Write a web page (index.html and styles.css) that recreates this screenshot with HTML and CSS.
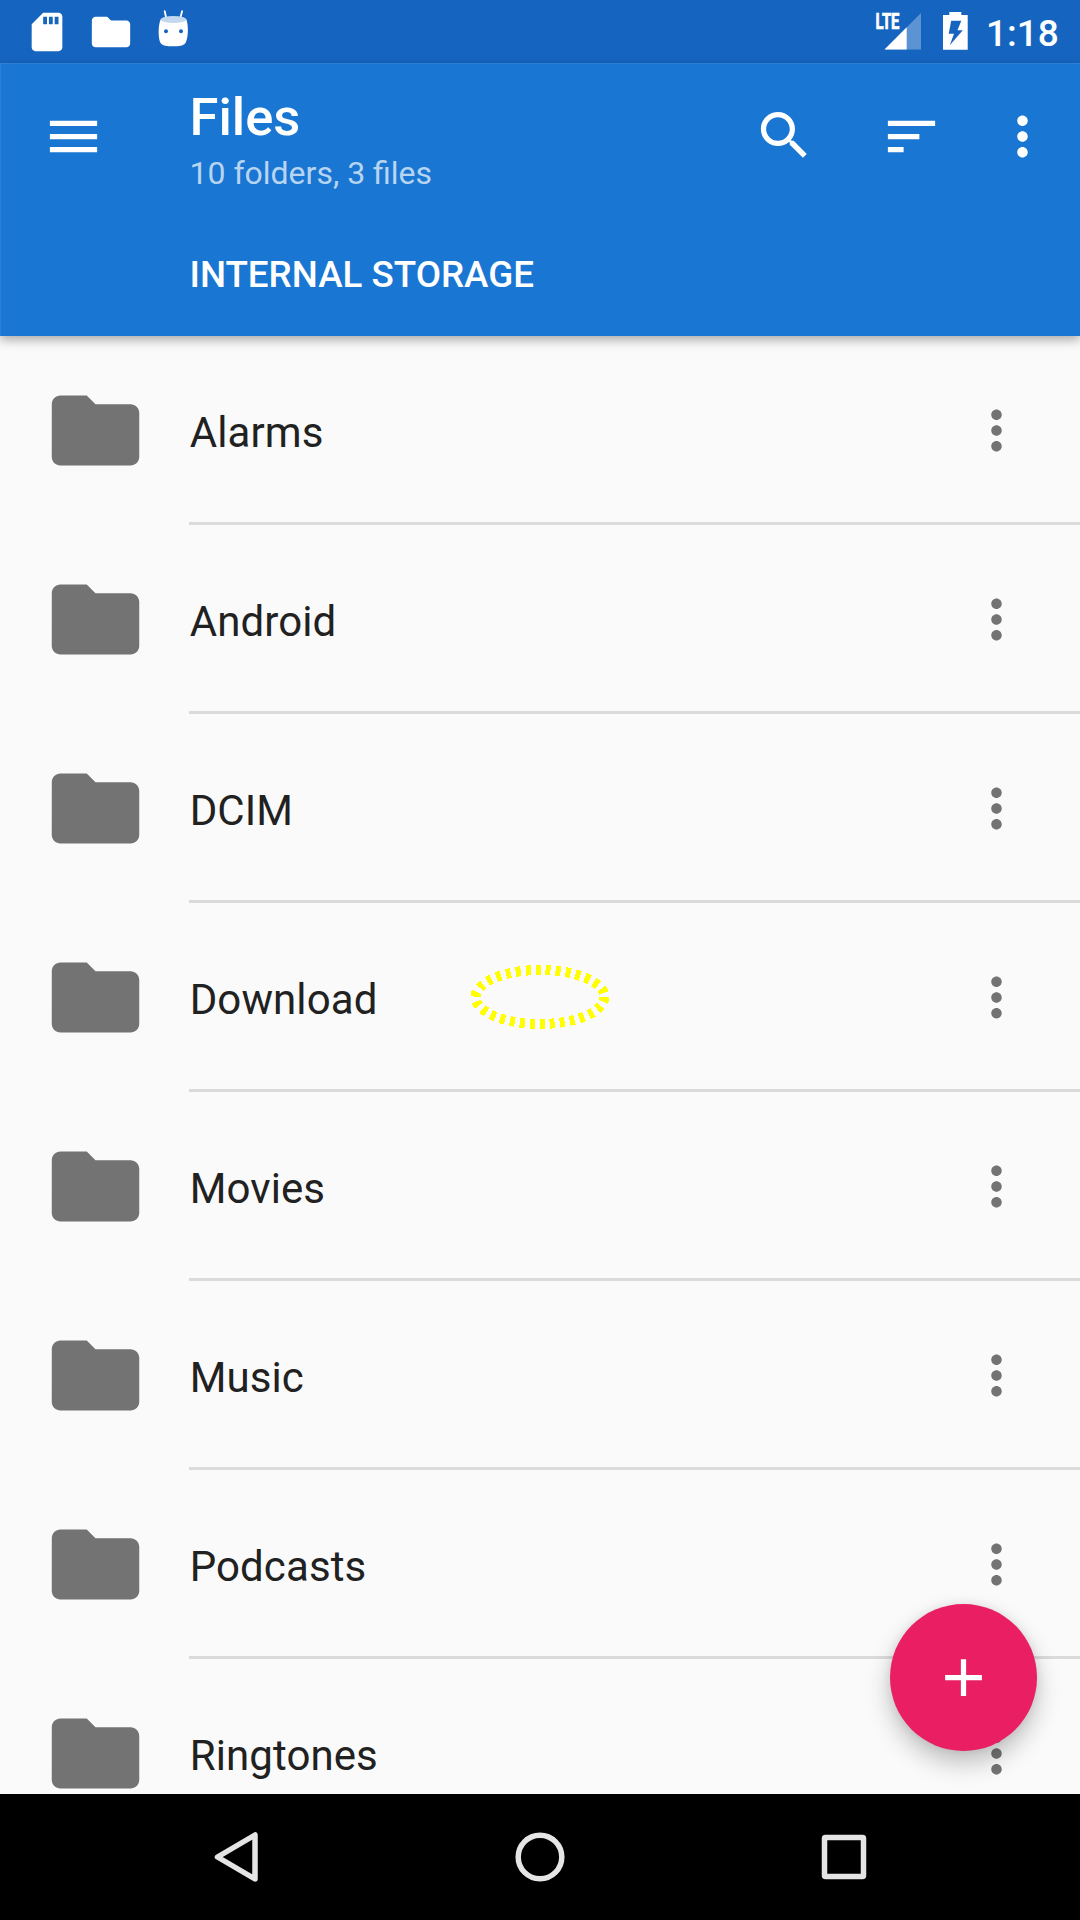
FILE: index.html
```html
<!DOCTYPE html>
<html lang="en">
<head>
<meta charset="utf-8">
<title>Files</title>
<link rel="stylesheet" href="styles.css">
</head>
<body>
<svg class="defs" width="0" height="0" aria-hidden="true">
  <symbol id="folder" viewBox="0 0 24 24"><path d="M10 4H4c-1.1 0-1.99.9-1.99 2L2 18c0 1.1.9 2 2 2h16c1.1 0 2-.9 2-2V8c0-1.1-.9-2-2-2h-8l-2-2z"/></symbol>
  <symbol id="more" viewBox="0 0 24 24"><path d="M12 8c1.1 0 2-.9 2-2s-.9-2-2-2-2 .9-2 2 .9 2 2 2zm0 2c-1.1 0-2 .9-2 2s.9 2 2 2 2-.9 2-2-.9-2-2-2zm0 6c-1.1 0-2 .9-2 2s.9 2 2 2 2-.9 2-2-.9-2-2-2z"/></symbol>
</svg>
<div class="screen">
  <header class="status">
    <div class="notifications">
      <svg class="note" viewBox="0 0 24 24"><path d="M18 2h-8L4.02 8 4 20c0 1.1.9 2 2 2h12c1.1 0 2-.9 2-2V4c0-1.1-.9-2-2-2zm-6 6h-2V4h2v4zm3 0h-2V4h2v4zm3 0h-2V4h2v4z"/></svg>
      <svg class="note"><use href="#folder"/></svg>
      <svg class="droid" viewBox="0 0 32 38">
        <path d="M6.700 1.200 8.200 8M24.100 1.200 22.300 8" fill="none" stroke="#fff" stroke-width="1.800" stroke-linecap="round"/>
        <path d="M2.800 9C0 15 .2 27 2 32q.8 2.600 4 3.400 9 1.800 18 0 3.200-.8 4-3.400C30.300 27 30.700 15 28.200 9q-12.700 6-25.400 0z"/>
        <ellipse cx="15.500" cy="9.500" rx="12.700" ry="3.500" fill="#c3d7ef"/>
        <circle cx="8" cy="21.300" r="2" fill="#1565c0"/><circle cx="23" cy="21.300" r="2" fill="#1565c0"/>
      </svg>
    </div>
    <svg class="signal" viewBox="0 0 48 40">
      <path d="M46 1v36.500H9.500z" opacity=".3"/>
      <path d="M31.700 15.300v22.200H9.500z"/>
      <text class="lte" x=".5" y="17" textLength="24" lengthAdjust="spacingAndGlyphs">LTE</text>
    </svg>
    <svg class="battery" viewBox="0 0 25 38"><path fill-rule="evenodd" d="M6.300 0h12v3H24.700v34.700H0V3h6.300zM8.200 8.800 5.700 21.700H11L6.800 33.200 19.800 18.300H14.500L18.300 8.800z"/></svg>
    <span class="clock">1:18</span>
  </header>
  <section class="appbar">
    <div class="toolbar">
      <svg class="icon" viewBox="0 0 24 24"><path d="M3 18h18v-2H3v2zm0-5h18v-2H3v2zm0-7v2h18V6H3z"/></svg>
      <div class="titles">
        <h1 class="title">Files</h1>
        <p class="subtitle">10 folders, 3 files</p>
      </div>
      <svg class="icon search" viewBox="0 0 24 24"><path d="M15.500 14h-.79l-.28-.27C15.410 12.590 16 11.110 16 9.500 16 5.910 13.090 3 9.500 3S3 5.910 3 9.500 5.910 16 9.500 16c1.610 0 3.090-.59 4.230-1.570l.27.28v.79l5 4.990L20.490 19l-4.990-5zm-6 0C7.010 14 5 11.990 5 9.500S7.010 5 9.500 5 14 7.010 14 9.500 11.990 14 9.500 14z"/></svg>
      <svg class="icon sort" viewBox="0 0 24 24"><path d="M3 18h6v-2H3v2zM3 6v2h18V6H3zm0 7h12v-2H3v2z"/></svg>
      <svg class="icon overflow"><use href="#more"/></svg>
    </div>
    <div class="path">INTERNAL STORAGE</div>
  </section>
  <main class="list">
    <div class="row"><svg class="folder"><use href="#folder"/></svg><div class="cell"><span class="name">Alarms</span><svg class="more"><use href="#more"/></svg></div></div>
    <div class="row"><svg class="folder"><use href="#folder"/></svg><div class="cell"><span class="name">Android</span><svg class="more"><use href="#more"/></svg></div></div>
    <div class="row"><svg class="folder"><use href="#folder"/></svg><div class="cell"><span class="name">DCIM</span><svg class="more"><use href="#more"/></svg></div></div>
    <div class="row"><svg class="folder"><use href="#folder"/></svg><div class="cell"><span class="name">Download</span><svg class="more"><use href="#more"/></svg></div></div>
    <div class="row"><svg class="folder"><use href="#folder"/></svg><div class="cell"><span class="name">Movies</span><svg class="more"><use href="#more"/></svg></div></div>
    <div class="row"><svg class="folder"><use href="#folder"/></svg><div class="cell"><span class="name">Music</span><svg class="more"><use href="#more"/></svg></div></div>
    <div class="row"><svg class="folder"><use href="#folder"/></svg><div class="cell"><span class="name">Podcasts</span><svg class="more"><use href="#more"/></svg></div></div>
    <div class="row"><svg class="folder"><use href="#folder"/></svg><div class="cell"><span class="name">Ringtones</span><svg class="more"><use href="#more"/></svg></div></div>
    <svg class="marker" viewBox="0 0 140 66"><ellipse cx="70" cy="33" rx="64.500" ry="27"/></svg>
    <div class="fab"><svg class="icon" viewBox="0 0 24 24"><path d="M19 13h-6v6h-2v-6H5v-2h6V5h2v6h6v2z"/></svg></div>
  </main>
  <nav class="navbar">
    <svg class="key" viewBox="0 0 60 60"><path d="M49 8v44L11.500 30z"/></svg>
    <svg class="key" viewBox="0 0 60 60"><circle cx="30" cy="30" r="21.800"/></svg>
    <svg class="key" viewBox="0 0 60 60"><rect x="10.500" y="10.500" width="39" height="39" rx="1"/></svg>
  </nav>
</div>
</body>
</html>
```
FILE: styles.css
```css
* { box-sizing: border-box; margin: 0; padding: 0; }

body { font-family: Roboto, sans-serif; background: #fafafa; }

svg { display: block; flex: none; fill: currentColor; }

.defs { position: absolute; }

.screen {
  display: flex;
  flex-direction: column;
  width: 1080px;
  height: 1920px;
  overflow: hidden;
}

/* Status bar */
.status {
  display: flex;
  height: 63px;
  padding-left: 24px;
  background: #1565c0;
  color: #fff;
}
.notifications { display: flex; gap: 17.5px; flex: 1; padding-top: 8.5px; }
.note { width: 46px; height: 46px; }
.droid { width: 32px; height: 38px; margin: 1.5px 0 0 7px; }
.signal { width: 48px; height: 40px; margin: 12px 20px 0 0; overflow: visible; }
.lte {
  font: 700 21.5px Roboto, sans-serif;
  stroke: currentColor;
  stroke-width: .7;
}
.battery { width: 25px; height: 38px; margin: 12px 18px 0 0; }
.clock {
  width: 94px;
  font-size: 37px;
  font-weight: 500;
  line-height: 67px;
}

/* App bar */
.appbar {
  position: relative;
  z-index: 1;
  height: 273px;
  background: #1976d2;
  color: #fff;
  box-shadow: 0 4px 10px rgba(0, 0, 0, .32), inset 1px 1px 0 rgba(255, 255, 255, .07);
}
.toolbar { display: flex; align-items: center; height: 147px; padding: 0 26px 0 42px; }
.icon { width: 63px; height: 63px; }
.titles { flex: 1; padding: 8px 0 0 84.5px; }
.title { font-size: 52.5px; font-weight: 500; line-height: 62px; }
.subtitle {
  padding-top: 2px;
  font-size: 32px;
  line-height: 46px;
  color: rgba(255, 255, 255, .7);
}
.search { margin: 0 64px 2px 0; }
.sort { margin-right: 48px; }
.path {
  padding-left: 189.5px;
  font-size: 36.75px;
  font-weight: 500;
  line-height: 130px;
}

/* File list */
.list { position: relative; flex: 1; overflow: hidden; background: #fafafa; }
.row { display: flex; align-items: center; height: 189px; padding-left: 43px; color: #737373; }
.folder { width: 105px; height: 105px; }
.cell {
  display: flex;
  align-items: center;
  flex: 1;
  height: 189px;
  margin-left: 41px;
  padding: 3px 52px 0 0;
  border-bottom: 3px solid #dbdbdb;
}
.name {
  flex: 1;
  padding: 5px 0 0 .7px;
  color: #212121;
  font-size: 42px;
  line-height: 50px;
  letter-spacing: .1px;
}
.more { width: 63px; height: 63px; }

.marker { position: absolute; left: 470px; top: 628px; width: 140px; height: 66px; }
.marker ellipse {
  fill: none;
  stroke: #ff0;
  stroke-width: 10;
  stroke-dasharray: 5 5;
  shape-rendering: crispEdges;
}

.fab {
  position: absolute;
  right: 43px;
  bottom: 43px;
  display: flex;
  align-items: center;
  justify-content: center;
  width: 147px;
  height: 147px;
  border-radius: 50%;
  background: #e91e63;
  color: #fff;
  box-shadow: 0 12px 24px rgba(0, 0, 0, .24), 0 0 10px rgba(0, 0, 0, .08);
}

/* Navigation bar */
.navbar {
  display: flex;
  align-items: center;
  justify-content: center;
  gap: 244px;
  height: 126px;
  background: #000;
}
.key {
  width: 60px;
  height: 60px;
  fill: none;
  stroke: #e5e5e5;
  stroke-width: 5.5;
  stroke-linejoin: round;
}
```
